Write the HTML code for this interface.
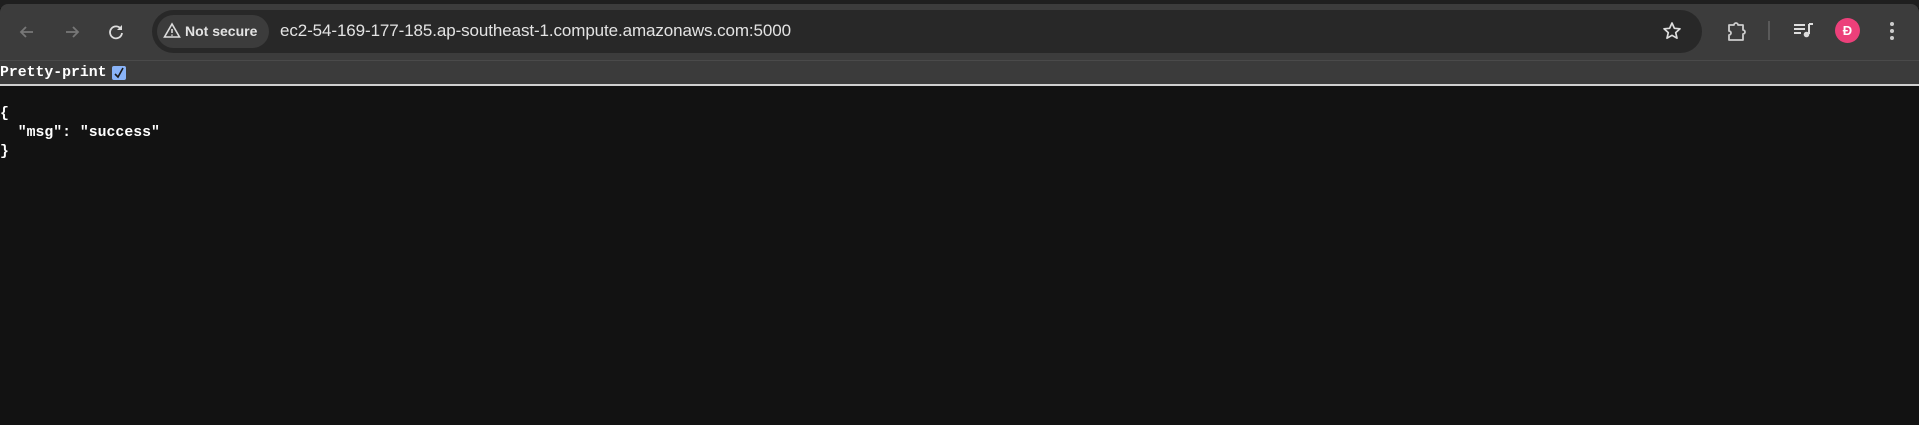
<!DOCTYPE html>
<html><head><style>
*{margin:0;padding:0;box-sizing:border-box}
body{width:1919px;height:425px;background:#121212;overflow:hidden;position:relative;font-family:"Liberation Sans",sans-serif}
.top{position:absolute;left:0;top:0;width:1919px;height:8px;background:#1f1f1f}
.tb{position:absolute;left:0;top:4px;width:1919px;height:57px;background:#3c3c3c;border-radius:8px 8px 0 0;border-bottom:1px solid #4a4a4a}
.pill{position:absolute;left:152px;top:10px;width:1550px;height:43px;background:#282828;border-radius:22px}
.chip{position:absolute;left:157px;top:15px;width:112px;height:33px;background:#3c3c3c;border-radius:17px;color:#e3e3e3;font-size:14px;font-weight:bold;line-height:33px;padding-left:28px}
.url{position:absolute;left:280px;top:21px;color:#e3e3e3;font-size:17px;letter-spacing:-0.1px}
.pp{position:absolute;left:0;top:61px;width:1919px;height:25px;background:#3b3b3b;border-bottom:2px solid #cfcfcf}
.pp span{position:absolute;left:0;top:4px;font-family:"Liberation Mono",monospace;font-size:14.8px;font-weight:bold;color:#fff}
.cb{position:absolute;left:112px;top:5px;width:14px;height:14px;background:#8ab4f8;border-radius:2px}
pre{position:absolute;left:0;top:105px;font-family:"Liberation Mono",monospace;font-size:14.8px;font-weight:bold;line-height:19px;color:#fff}
svg{position:absolute}
</style></head><body>
<div class="top"></div>
<div class="tb"></div>
<svg style="left:17px;top:22px" width="20" height="20" viewBox="0 0 20 20"><path d="M16 10H4M9 5l-5 5 5 5" stroke="#777" stroke-width="1.8" fill="none"/></svg>
<svg style="left:62px;top:22px" width="20" height="20" viewBox="0 0 20 20"><path d="M4 10h12M11 5l5 5-5 5" stroke="#777" stroke-width="1.8" fill="none"/></svg>
<svg style="left:106px;top:22px" width="20" height="20" viewBox="0 0 20 20"><path d="M15 7A6 6 0 1 0 16 11" stroke="#ddd" stroke-width="1.8" fill="none"/><path d="M16 3v5h-5z" fill="#ddd"/></svg>
<div class="pill"></div>
<div class="chip">Not secure</div>
<svg style="left:163px;top:22px" width="18" height="17" viewBox="0 0 18 17"><path d="M9 2L1.5 15h15z" stroke="#ddd" stroke-width="1.6" fill="none"/><path d="M9 7v4M9 12.5v1.3" stroke="#ddd" stroke-width="1.6"/></svg>
<div class="url">ec2-54-169-177-185.ap-southeast-1.compute.amazonaws.com:5000</div>
<svg style="left:1662px;top:21px" width="20" height="20" viewBox="0 0 20 20"><path d="M10 2l2.4 5.3 5.6.5-4.3 3.8 1.3 5.6L10 14.3 5 17.2l1.3-5.6L2 7.8l5.6-.5z" stroke="#ddd" stroke-width="1.7" fill="none" stroke-linejoin="round"/></svg>
<svg style="left:1726px;top:21px" width="22" height="22" viewBox="0 0 22 22"><path d="M3 4h5a2 2 0 0 1 4 0h5v5a2 2 0 0 1 0 4v6H3v-5a2 2 0 0 0 0-4z" stroke="#ccc" stroke-width="1.8" fill="none" stroke-linejoin="round"/></svg>
<div style="position:absolute;left:1768px;top:21px;width:2px;height:19px;background:#5a5a5a"></div>
<svg style="left:1793px;top:21px" width="22" height="20" viewBox="0 0 22 20"><path d="M1 4h11M1 8h11M1 12h7" stroke="#ddd" stroke-width="2"/><path d="M16 3v10" stroke="#ddd" stroke-width="2"/><path d="M16 3h4" stroke="#ddd" stroke-width="2"/><circle cx="13.5" cy="13.5" r="2.8" fill="#ddd"/></svg>
<div style="position:absolute;left:1835px;top:18px;width:25px;height:25px;border-radius:50%;background:#ec407a;color:#fff;font-size:13px;font-weight:bold;text-align:center;line-height:25px">Đ</div>
<svg style="left:1888px;top:20px" width="8" height="22" viewBox="0 0 8 22"><circle cx="4" cy="4" r="2" fill="#ccc"/><circle cx="4" cy="11" r="2" fill="#ccc"/><circle cx="4" cy="18" r="2" fill="#ccc"/></svg>
<div class="pp"><span>Pretty-print</span><div class="cb"><svg style="left:2px;top:1px" width="10" height="12" viewBox="0 0 10 12"><path d="M1 7l3 3 5-9" stroke="#1a1a1a" stroke-width="1.6" fill="none"/></svg></div></div>
<pre>{
  "msg": "success"
}</pre>
</body></html>
